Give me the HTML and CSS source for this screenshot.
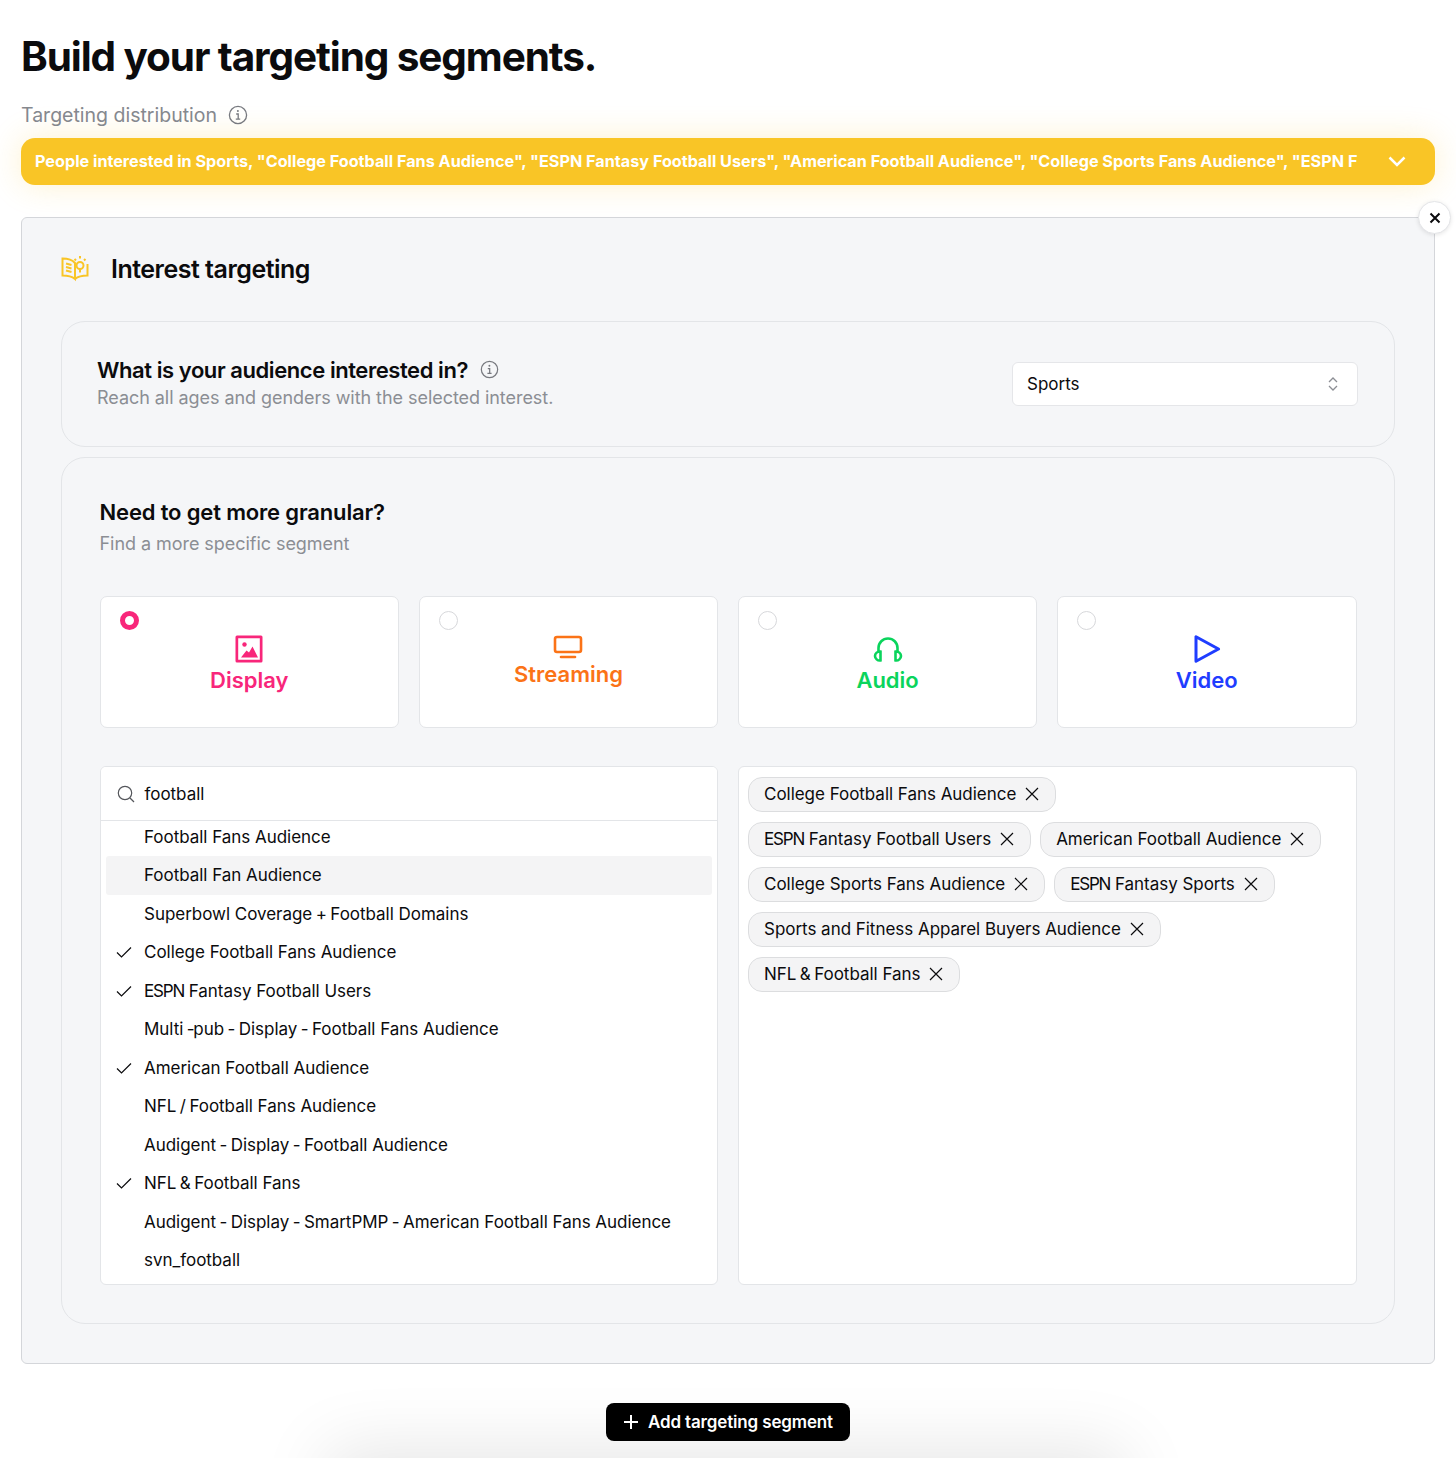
FILE: index.html
```html
<!DOCTYPE html>
<html lang="en">
<head>
    <meta charset="UTF-8">
    <meta name="viewport" content="width=device-width, initial-scale=1.0">
    <title>Build your targeting segments</title>
    <link rel="stylesheet" href="styles.css">
</head>
<body>
    <div class="page">
        <h1 class="page-title">Build your targeting segments.</h1>

        <div class="dist-label">
            <span>Targeting distribution</span>
            <svg class="info-icon" viewBox="0 0 20 20" width="20" height="20"><circle cx="10" cy="10" r="8.6"/><path d="M8.2 9h2v5M7.8 14.2h4.4"/><circle class="dot" cx="9.9" cy="6" r="1"/></svg>
        </div>

        <div class="dist-bar">
            <div class="dist-text">People interested in Sports, "College Football Fans Audience", "ESPN Fantasy Football Users", "American Football Audience", "College Sports Fans Audience", "ESPN F</div>
            <svg class="dist-chevron" viewBox="0 0 18 11" width="18" height="11"><path d="M1.5 1.5 9 9l7.5-7.5"/></svg>
        </div>

        <section class="panel">
            <button class="close-btn" type="button">
                <svg viewBox="0 0 12 12" width="12" height="12"><path d="M1.5 1.5l9 9M10.5 1.5l-9 9"/></svg>
            </button>

            <div class="panel-head">
                <svg class="book-icon" viewBox="0 0 30 28" width="30" height="28">
                    <path d="M2.500 3.500C7 3.500 12 4.500 15 8v16c-3-2.500-8-3.500-12.500-3.500z"/>
                    <path d="M15 24c3-2.500 8-3.500 12.500-3.500V9"/>
                    <path d="M6 8.500l5.500 1.500M6 12l5.500 1.500M6 15.500l5.500 1.500"/>
                    <circle cx="20" cy="10.500" r="3.500"/>
                    <path d="M20 14v3.500M20 1v2.500M14.500 4 16 5.500M25.500 4 24 5.500"/>
                </svg>
                <h2 class="panel-title">Interest targeting</h2>
            </div>

            <div class="card card-interest">
                <div class="interest-copy">
                    <div class="interest-title">
                        <span>What is your audience interested in?</span>
                        <svg class="info-icon" viewBox="0 0 20 20" width="19" height="19"><circle cx="10" cy="10" r="8.6"/><path d="M8.2 9h2v5M7.8 14.2h4.4"/><circle class="dot" cx="9.900" cy="6" r="1"/></svg>
                    </div>
                    <div class="sub-text">Reach all ages and genders with the selected interest.</div>
                </div>
                <div class="select">
                    <span>Sports</span>
                    <svg viewBox="0 0 12 16" width="12" height="16"><path d="M2 6l4-4 4 4M2 10l4 4 4-4"/></svg>
                </div>
            </div>

            <div class="card card-granular">
                <h3 class="granular-title">Need to get more granular?</h3>
                <div class="sub-text">Find a more specific segment</div>

                <div class="channels">
                    <div class="channel channel-display">
                        <span class="radio radio-on"></span>
                        <svg viewBox="0 0 28 28" width="28" height="28"><path fill-rule="evenodd" d="M2 .5h24A1.500 1.500 0 0 1 27.500 2v24a1.500 1.500 0 0 1-1.500 1.500H2A1.500 1.500 0 0 1 .5 26V2A1.500 1.500 0 0 1 2 .5zM3.200 3.200v21.600h21.600V3.200z"/><circle cx="9.500" cy="9.500" r="2.200"/><path d="M6 22.500l5.500-7 2.500 2 3.500-6 5.500 11z"/></svg>
                        <span class="channel-name">Display</span>
                    </div>
                    <div class="channel channel-streaming">
                        <span class="radio"></span>
                        <svg viewBox="0 0 30 24" width="30" height="24"><rect x="2" y="2" width="26" height="15" rx="2"/><path d="M8 22h14"/></svg>
                        <span class="channel-name">Streaming</span>
                    </div>
                    <div class="channel channel-audio">
                        <span class="radio"></span>
                        <svg viewBox="0 0 30 26" width="30" height="26"><path d="M5.500 15V11a9.500 9.500 0 0 1 19 0v4"/><path d="M7.500 14.500c-3-.5-5.500 2-5.500 4.500s2.500 5 5.500 4.500zM22.500 14.500c3-.5 5.500 2 5.500 4.500s-2.500 5-5.500 4.500z"/></svg>
                        <span class="channel-name">Audio</span>
                    </div>
                    <div class="channel channel-video">
                        <span class="radio"></span>
                        <svg viewBox="0 0 28 28" width="28" height="28"><path d="M3 1.800v24.400L25.500 14z"/></svg>
                        <span class="channel-name">Video</span>
                    </div>
                </div>

                <div class="picker">
                    <div class="picker-box">
                        <div class="search">
                            <svg viewBox="0 0 18 18" width="18" height="18"><circle cx="8" cy="8" r="6.700"/><path d="M13 13l4 4"/></svg>
                            <span>football</span>
                        </div>
                        <ul class="result-list">
                            <li class="result"><span class="tick"></span><span>Football Fans Audience</span></li>
                            <li class="result result-hover"><span class="tick"></span><span>Football Fan Audience</span></li>
                            <li class="result"><span class="tick"></span><span>Superbowl Coverage <span class="sym">+</span> Football Domains</span></li>
                            <li class="result"><span class="tick"><svg viewBox="0 0 16 12" width="16" height="12"><path d="M1 6.500 5.500 11 15 1.500"/></svg></span><span>College Football Fans Audience</span></li>
                            <li class="result"><span class="tick"><svg viewBox="0 0 16 12" width="16" height="12"><path d="M1 6.500 5.500 11 15 1.500"/></svg></span><span><span class="caps">ESPN</span> Fantasy Football Users</span></li>
                            <li class="result"><span class="tick"></span><span>Multi <span class="sym">-</span>pub <span class="sym">-</span> Display <span class="sym">-</span> Football Fans Audience</span></li>
                            <li class="result"><span class="tick"><svg viewBox="0 0 16 12" width="16" height="12"><path d="M1 6.500 5.500 11 15 1.500"/></svg></span><span>American Football Audience</span></li>
                            <li class="result"><span class="tick"></span><span>NFL <span class="sym">/</span> Football Fans Audience</span></li>
                            <li class="result"><span class="tick"></span><span>Audigent <span class="sym">-</span> Display <span class="sym">-</span> Football Audience</span></li>
                            <li class="result"><span class="tick"><svg viewBox="0 0 16 12" width="16" height="12"><path d="M1 6.500 5.500 11 15 1.500"/></svg></span><span>NFL <span class="sym">&amp;</span> Football Fans</span></li>
                            <li class="result"><span class="tick"></span><span>Audigent <span class="sym">-</span> Display <span class="sym">-</span> SmartPMP <span class="sym">-</span> American Football Fans Audience</span></li>
                            <li class="result"><span class="tick"></span><span>svn_football</span></li>
                        </ul>
                    </div>

                    <div class="picker-box tag-box">
                        <span class="tag"><span>College Football Fans Audience</span><svg viewBox="0 0 14 14" width="14" height="14"><path d="M1 1l12 12M13 1 1 13"/></svg></span>
                        <span class="tag"><span><span class="caps">ESPN</span> Fantasy Football Users</span><svg viewBox="0 0 14 14" width="14" height="14"><path d="M1 1l12 12M13 1 1 13"/></svg></span>
                        <span class="tag"><span>American Football Audience</span><svg viewBox="0 0 14 14" width="14" height="14"><path d="M1 1l12 12M13 1 1 13"/></svg></span>
                        <span class="tag"><span>College Sports Fans Audience</span><svg viewBox="0 0 14 14" width="14" height="14"><path d="M1 1l12 12M13 1 1 13"/></svg></span>
                        <span class="tag"><span><span class="caps">ESPN</span> Fantasy Sports</span><svg viewBox="0 0 14 14" width="14" height="14"><path d="M1 1l12 12M13 1 1 13"/></svg></span>
                        <span class="tag"><span>Sports and Fitness Apparel Buyers Audience</span><svg viewBox="0 0 14 14" width="14" height="14"><path d="M1 1l12 12M13 1 1 13"/></svg></span>
                        <span class="tag"><span>NFL <span class="sym">&amp;</span> Football Fans</span><svg viewBox="0 0 14 14" width="14" height="14"><path d="M1 1l12 12M13 1 1 13"/></svg></span>
                    </div>
                </div>
            </div>
        </section>

        <div class="add-row">
            <button class="add-btn" type="button">
                <svg viewBox="0 0 14 14" width="14" height="14"><path d="M7 0v14M0 7h14"/></svg>
                Add targeting segment
            </button>
        </div>
    </div>
</body>
</html>
```

FILE: styles.css
```css
* {
    box-sizing: border-box;
}
html, body {
    margin: 0;
    height: 1458px;
    overflow: hidden;
}
body {
    font-family: Inter, "Liberation Sans", sans-serif;
    color: #0b0b0d;
    background: #fff;
}
svg {
    flex: none;
}
.page {
    position: relative;
    height: 1458px;
    padding: 31px 21px 0;
    overflow: hidden;
}
.page-title {
    margin: 0;
    font-size: 40.5px;
    line-height: 52px;
    font-weight: 700;
    letter-spacing: -1.1px;
}
.dist-label {
    display: flex;
    align-items: center;
    gap: 11px;
    margin-top: 19px;
    height: 26px;
    font-size: 19.5px;
    color: #85888e;
}
.info-icon {
    fill: none;
    stroke: #77797f;
    stroke-width: 1.3;
}
.info-icon .dot {
    fill: #77797f;
    stroke: none;
}
.dist-bar {
    display: flex;
    align-items: center;
    height: 47px;
    margin-top: 10px;
    padding: 0 29px 0 14px;
    border-radius: 14px;
    background: #f9c526;
    box-shadow: 0 0 32px rgba(249, 197, 38, 0.22);
}
.dist-text {
    flex: 1;
    min-width: 0;
    padding-bottom: 2px;
    white-space: nowrap;
    font-size: 16.2px;
    font-weight: 700;
    color: #fff;
}
.dist-chevron {
    margin-left: 30px;
    fill: none;
    stroke: #fff;
    stroke-width: 2.5;
}
.panel {
    position: relative;
    height: 1147px;
    margin-top: 32px;
    padding: 0 39px;
    border: 1px solid #d4d6da;
    border-radius: 6px;
    background: #f5f6f8;
}
.close-btn {
    position: absolute;
    top: -17px;
    right: -17px;
    display: flex;
    align-items: center;
    justify-content: center;
    width: 33px;
    height: 33px;
    padding: 0;
    border: 1px solid #e4e5e8;
    border-radius: 50%;
    background: #fff;
    box-shadow: 0 1px 4px rgba(0, 0, 0, 0.1);
}
.close-btn svg {
    fill: none;
    stroke: #0b0b0d;
    stroke-width: 2;
}
.panel-head {
    display: flex;
    align-items: center;
    gap: 21px;
    height: 103px;
    padding-bottom: 2px;
}
.book-icon {
    margin-left: -1px;
    fill: none;
    stroke: #f9c526;
    stroke-width: 2;
}
.panel-title {
    margin: 0;
    font-size: 25px;
    font-weight: 600;
    letter-spacing: -0.5px;
}
.card {
    border: 1px solid #e3e5e8;
    border-radius: 24px;
}
.card-interest {
    display: flex;
    align-items: center;
    justify-content: space-between;
    height: 126px;
    padding: 0 36px 0 35px;
}
.interest-copy {
    padding-bottom: 1px;
}
.interest-title {
    display: flex;
    align-items: center;
    gap: 12px;
    margin-bottom: 2px;
    font-size: 22px;
    line-height: 26px;
    font-weight: 600;
    letter-spacing: -0.43px;
}
.sub-text {
    font-size: 18px;
    line-height: 26px;
    letter-spacing: -0.05px;
    color: #8b8e94;
}
.select {
    display: flex;
    align-items: center;
    justify-content: space-between;
    width: 346px;
    height: 44px;
    padding: 0 18px 0 14px;
    border: 1px solid #e5e6e9;
    border-radius: 6px;
    background: #fff;
    font-size: 17px;
}
.select svg {
    fill: none;
    stroke: #8c8e94;
    stroke-width: 1.3;
}
.card-granular {
    height: 867px;
    margin-top: 10px;
    padding: 40px 37.5px 0;
}
.granular-title {
    margin: 0 0 5px;
    font-size: 22px;
    line-height: 28px;
    font-weight: 600;
    letter-spacing: -0.16px;
}
.channels {
    display: grid;
    grid-template-columns: repeat(4, 1fr);
    gap: 19.500px;
    margin-top: 39px;
}
.channel {
    position: relative;
    display: flex;
    flex-direction: column;
    align-items: center;
    height: 132px;
    padding-top: 38px;
    border: 1px solid #e3e5e8;
    border-radius: 7px;
    background: #fff;
    font-size: 22px;
    font-weight: 600;
    line-height: 26px;
}
.channel-name {
    margin-top: 4px;
}
.radio {
    position: absolute;
    top: 14px;
    left: 19.5px;
    width: 19px;
    height: 19px;
    border: 1px solid #d7d8db;
    border-radius: 50%;
}
.radio-on {
    border: 5px solid #f8267a;
}
.channel-display {
    color: #f8267a;
}
.channel-display svg {
    fill: #f8267a;
}
.channel-streaming {
    color: #fb7317;
}
.channel-streaming .channel-name {
    margin-top: 2px;
}
.channel-streaming svg {
    fill: none;
    stroke: #fb7317;
    stroke-width: 2.6;
    stroke-linecap: round;
}
.channel-audio {
    padding-top: 40px;
    color: #0ad45c;
}
.channel-audio svg {
    fill: none;
    stroke: #0ad45c;
    stroke-width: 2.600;
}
.channel-video {
    color: #1f3dff;
}
.channel-video svg {
    fill: none;
    stroke: #1f3dff;
    stroke-width: 3;
    stroke-linejoin: round;
}
.picker {
    display: grid;
    grid-template-columns: 1fr 1fr;
    gap: 20px;
    margin-top: 38px;
}
.picker-box {
    height: 519px;
    overflow: hidden;
    border: 1px solid #e3e5e8;
    border-radius: 6px;
    background: #fff;
    font-size: 17px;
    letter-spacing: -0.03px;
}
.sym {
    margin: 0 -1.3px;
}
.caps {
    letter-spacing: -1.2px;
}
.search {
    position: relative;
    display: flex;
    align-items: center;
    gap: 10px;
    height: 54px;
    padding-left: 16px;
    border-bottom: 1px solid #e3e5e8;
    background: #fff;
}
.search svg {
    fill: none;
    stroke: #55575c;
    stroke-width: 1.2;
}
.result-list {
    margin: -3.5px 0 0;
    padding: 0 5px;
    list-style: none;
}
.result {
    display: flex;
    align-items: center;
    gap: 12.5px;
    height: 38.500px;
    padding-left: 10px;
    white-space: nowrap;
}
.result-hover {
    background: #f4f4f5;
    border-radius: 3px;
}
.tick {
    display: flex;
    width: 16px;
}
.tick svg {
    fill: none;
    stroke: #0b0b0d;
    stroke-width: 1.2;
}
.tag-box {
    display: flex;
    flex-wrap: wrap;
    align-content: flex-start;
    gap: 10px 9px;
    padding: 10px 9px;
}
.tag {
    display: flex;
    align-items: center;
    gap: 9px;
    height: 35px;
    padding: 0 16px 1px 15px;
    border: 1px solid #dcdddf;
    border-radius: 14px;
    background: #f4f4f5;
    white-space: nowrap;
}
.tag svg {
    fill: none;
    stroke: #0b0b0d;
    stroke-width: 1.2;
}
.add-row {
    position: relative;
    display: flex;
    justify-content: center;
    margin-top: 39px;
}
.add-row::before {
    content: "";
    position: absolute;
    top: 70px;
    left: 330px;
    width: 750px;
    height: 60px;
    background: #fff;
    box-shadow: 0 0 70px 24px rgba(0, 0, 0, 0.1);
}
.add-btn {
    position: relative;
    display: flex;
    align-items: center;
    gap: 10px;
    height: 38px;
    padding: 0 17px 0 18px;
    border: 0;
    border-radius: 8px;
    background: #000;
    color: #fff;
    font-family: inherit;
    font-size: 17px;
    font-weight: 600;
    letter-spacing: -0.15px;
}
.add-btn svg {
    fill: none;
    stroke: #fff;
    stroke-width: 2;
}
```
